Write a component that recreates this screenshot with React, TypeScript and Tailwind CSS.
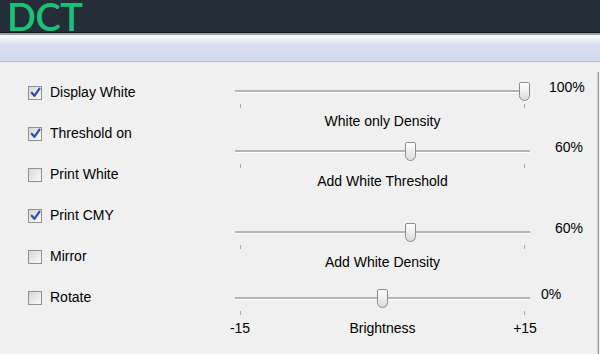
import React from 'react'

const Box = ({ checked }: { checked?: boolean }) => (
  <span className="flex h-[14px] w-[14px] shrink-0 items-center justify-center border border-[#8f9090] bg-gradient-to-br from-[#d8d8d8] to-[#fafafa]">
    {checked && (
      <svg width="11" height="11" viewBox="0 0 10 10">
        <path d="M1.6 5.2 L4 8 L8.6 1.4" fill="none" stroke="#2f4fa4" strokeWidth="2" strokeLinecap="round" strokeLinejoin="round" />
      </svg>
    )}
  </span>
)

const options = [
  { label: 'Display White', checked: true },
  { label: 'Threshold on', checked: true },
  { label: 'Print White', checked: false },
  { label: 'Print CMY', checked: true },
  { label: 'Mirror', checked: false },
  { label: 'Rotate', checked: false },
]

const Slider = ({ pos }: { pos: number }) => (
  <div className="relative h-[20px] w-[295px] shrink-0">
    <div className="absolute left-0 right-0 top-[9px] h-[3px] border-t-2 border-[#b4b4b4] bg-white" />
    <div
      className="absolute top-[1px] h-[19px] w-[11px] rounded-t-[2px] rounded-b-[6px] border border-[#8c8c8c] bg-gradient-to-b from-white to-[#dcdcdc]"
      style={{ left: `${pos * 284}px` }}
    />
  </div>
)

type Row = {
  pos: number
  value: string
  valueMl: string
  label: string
  mt: string
  ends?: boolean
}

const rows: Row[] = [
  { pos: 1, value: '100%', valueMl: 'ml-[19px]', label: 'White only Density', mt: 'mt-[19px]' },
  { pos: 0.6, value: '60%', valueMl: 'ml-[25px]', label: 'Add White Threshold', mt: 'mt-[12px]' },
  { pos: 0.6, value: '60%', valueMl: 'ml-[25px]', label: 'Add White Density', mt: 'mt-[33px]' },
  { pos: 0.5, value: '0%', valueMl: 'ml-[11px]', label: 'Brightness', mt: 'mt-[18px]', ends: true },
]

const SliderRow = ({ row }: { row: Row }) => (
  <div className={`flex flex-col ${row.mt}`}>
    <div className="flex h-[20px] items-center">
      <Slider pos={row.pos} />
      <span className={`mb-[8px] leading-4 ${row.valueMl}`}>{row.value}</span>
    </div>
    <div className="mt-[3px] flex h-[4px] w-[295px] justify-between px-[5px]">
      <span className="w-[1px] bg-[#a8a8a8]" />
      <span className="w-[1px] bg-[#a8a8a8]" />
    </div>
    <div className="mt-[5px] flex h-[16px] w-[295px] items-center justify-between leading-4">
      <span className="-ml-[10px] w-[30px] text-center">{row.ends ? '-15' : ''}</span>
      <span>{row.label}</span>
      <span className="-mr-[10px] w-[30px] text-center">{row.ends ? '+15' : ''}</span>
    </div>
  </div>
)

export default function App() {
  return (
    <div className="flex h-[354px] w-[600px] flex-col overflow-hidden bg-[#f0f0f0] font-['Liberation_Sans',Arial,sans-serif] text-[14px] text-black">
      <div className="flex h-[32px] shrink-0 items-start bg-[#242e39] pl-[7px]">
        <span className="font-['Lato',sans-serif] text-[38px] font-semibold leading-[32px] tracking-[-0.5px] text-[#1dc077]">DCT</span>
      </div>
      <div className="h-[1px] shrink-0 bg-[#151b22]" />
      <div className="h-[2px] shrink-0 bg-[#9aa1aa]" />
      <div className="h-[27px] shrink-0 border-b border-[#b6bdcd] bg-gradient-to-b from-[#fdfdff] via-[#d8deef] via-40% to-[#d3d9ed]" />
      <div className="flex min-h-0 flex-1">
        <div className="flex flex-1">
          <div className="flex w-[235px] flex-col pl-[28px] pt-[10px]">
            {options.map((o) => (
              <div key={o.label} className="flex h-[41px] items-center gap-[8px]">
                <Box checked={o.checked} />
                <span>{o.label}</span>
              </div>
            ))}
          </div>
          <div className="flex flex-col">
            {rows.map((r) => (
              <SliderRow key={r.label} row={r} />
            ))}
          </div>
        </div>
        <div className="mt-[10px] mr-[1px] w-[2px] border-l border-[#d0d0d0] bg-[#9e9e9e]" />
      </div>
    </div>
  )
}
